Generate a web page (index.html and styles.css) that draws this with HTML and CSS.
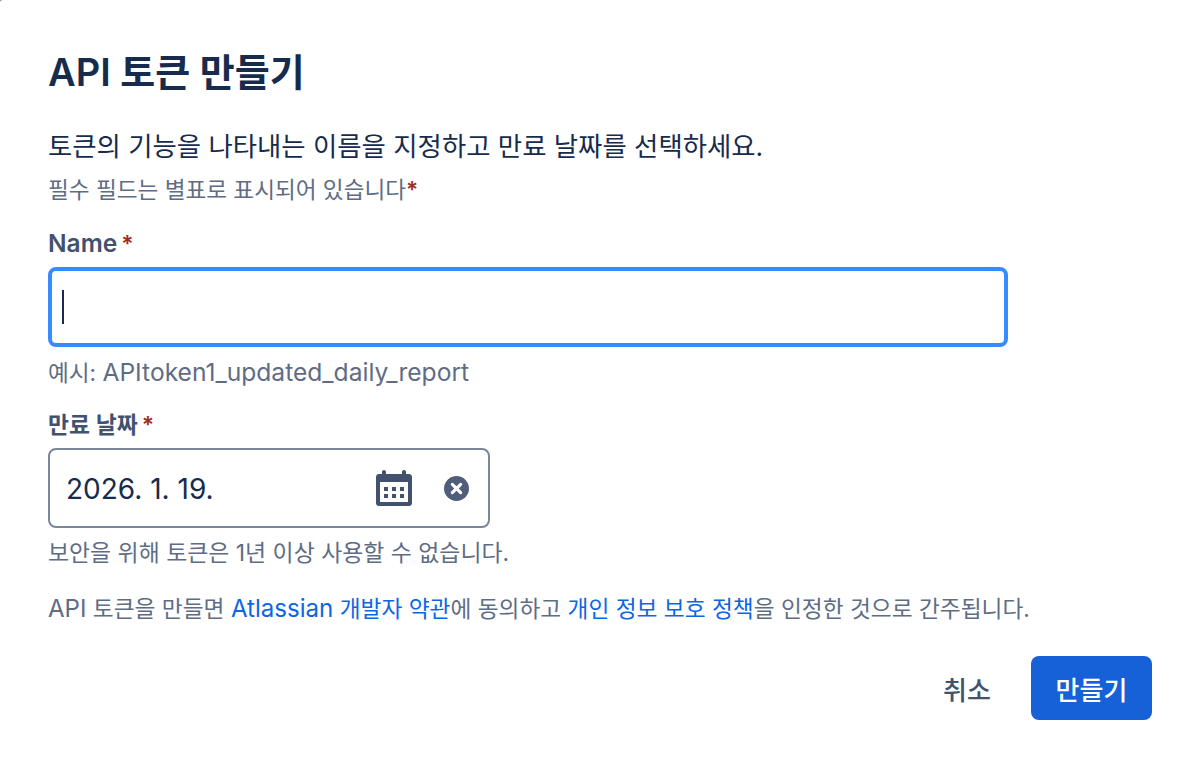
FILE: index.html
```html
<!DOCTYPE html>
<html lang="ko">
    <head>
        <meta charset="utf-8">
        <title>API 토큰 만들기</title>
        <link rel="stylesheet" href="styles.css">
    </head>
    <body>
        <form class="modal">
            <h1 class="modal__title">API 토큰 만들기</h1>
            <p class="modal__lead">토큰의 기능을 나타내는 이름을 지정하고 만료 날짜를 선택하세요.</p>
            <p class="hint hint--required">필수 필드는 별표로 표시되어 있습니다<span class="star star--inline">*</span></p>

            <label class="label label--name"><span class="lat">Name</span><span class="star">*</span></label>
            <div class="name-input"><span class="caret"></span></div>
            <p class="hint hint--example">예시: <span class="lat">APItoken1_updated_daily_report</span></p>

            <label class="label label--date">만료 날짜<span class="star">*</span></label>
            <div class="date-input">
                <span class="date-input__value">2026. 1. 19.</span>
                <svg class="icon-calendar" width="36" height="36" viewBox="0 0 36 36">
                    <path fill="#42526e" fill-rule="evenodd" d="M8 0c1.100 0 2 .9 2 2v2h16V2c0-1.100.9-2 2-2s2 .9 2 2v2h3c1.700 0 3 1.300 3 3v26c0 1.700-1.300 3-3 3H3c-1.700 0-3-1.300-3-3V7c0-1.700 1.300-3 3-3h3V2c0-1.100.9-2 2-2zM4 12v20h28V12H4z"/>
                    <path fill="#42526e" d="M8 17h4v4H8zM16 17h4v4h-4zM24 17h4v4h-4zM8 24h4v4H8zM16 24h4v4h-4zM24 24h4v4h-4z"/>
                </svg>
                <svg class="icon-clear" width="25" height="25" viewBox="0 0 24 24">
                    <circle cx="12" cy="12" r="12" fill="#505f79"/>
                    <path d="M8 8l8 8M16 8l-8 8" stroke="#fff" stroke-width="3" stroke-linecap="round"/>
                </svg>
            </div>
            <p class="hint hint--date">보안을 위해 토큰은 1년 이상 사용할 수 없습니다.</p>

            <p class="hint hint--terms"><span class="lat">API</span> 토큰을 만들면 <a href="#"><span class="lat">Atlassian</span> 개발자 약관</a>에 동의하고 <a href="#">개인 정보 보호 정책</a>을 인정한 것으로 간주됩니다.</p>

            <div class="actions">
                <button type="button" class="btn btn--subtle">취소</button>
                <button type="button" class="btn btn--primary">만들기</button>
            </div>
        </form>
    </body>
</html>
```

FILE: styles.css
```css
html, body, h1, p {
    margin: 0;
    padding: 0;
}

body {
    width: 1198px;
    height: 762px;
    overflow: hidden;
    background: #8993a4;
    font-family: Inter, "Noto Sans CJK KR", sans-serif;
    color: #172b4d;
}

.modal {
    display: flex;
    flex-direction: column;
    box-sizing: border-box;
    height: 762px;
    padding: 46px 46px 0 48px;
    background: #fff;
    border-top-left-radius: 3px;
}

.modal__title {
    font-size: 38px;
    line-height: 52px;
    font-weight: 600;
    color: #172b4d;
}

.modal__lead {
    margin-top: 30px;
    font-size: 26.400px;
    line-height: 36px;
}

.hint {
    font-size: 22.600px;
    line-height: 32px;
    color: #5e6c84;
}

.lat {
    font-size: 24.500px;
}

.hint--required {
    margin-top: 10px;
}

.star {
    margin-left: 4px;
    color: #9f2d1d;
    font-weight: 600;
}

.star--inline {
    margin-left: 0;
}

.label {
    font-size: 22.800px;
    line-height: 32px;
    font-weight: 600;
    color: #42526e;
}

.label--name {
    margin-top: 21px;
}

.name-input {
    display: flex;
    align-items: center;
    box-sizing: border-box;
    width: 960px;
    height: 80px;
    margin-top: 7px;
    padding-left: 10px;
    border: 4px solid #388bff;
    border-radius: 8px;
}

.caret {
    width: 2px;
    height: 34px;
    background: #172b4d;
}

.hint--example {
    margin-top: 9px;
}

.hint--example .lat {
    font-size: 24.600px;
}

.label--date {
    margin-top: 20px;
}

.date-input {
    display: flex;
    align-items: center;
    box-sizing: border-box;
    width: 442px;
    height: 80px;
    margin-top: 7px;
    padding: 0 19px 0 16px;
    border: 2px solid #7a869a;
    border-radius: 8px;
}

.date-input__value {
    flex: 1;
    padding-top: 1px;
    font-size: 28px;
    color: #172b4d;
}

.icon-clear {
    margin-left: 32px;
}

.hint--date {
    margin-top: 9px;
    font-size: 22.900px;
}

.hint--terms {
    margin-top: 24px;
    font-size: 22.700px;
}

.hint--terms .lat {
    font-size: 24.100px;
}

.hint a {
    color: #0c66e4;
    text-decoration: none;
}

.actions {
    display: flex;
    justify-content: flex-end;
    align-items: center;
    gap: 16px;
    margin-top: 31px;
}

.btn {
    width: 121px;
    height: 64px;
    padding: 0;
    border: 0;
    border-radius: 8px;
    font-family: inherit;
    font-size: 26px;
    font-weight: 500;
}

.btn--subtle {
    width: 96px;
    background: transparent;
    color: #42526e;
}

.btn--primary {
    background: #1660d8;
    color: #fff;
}
```
